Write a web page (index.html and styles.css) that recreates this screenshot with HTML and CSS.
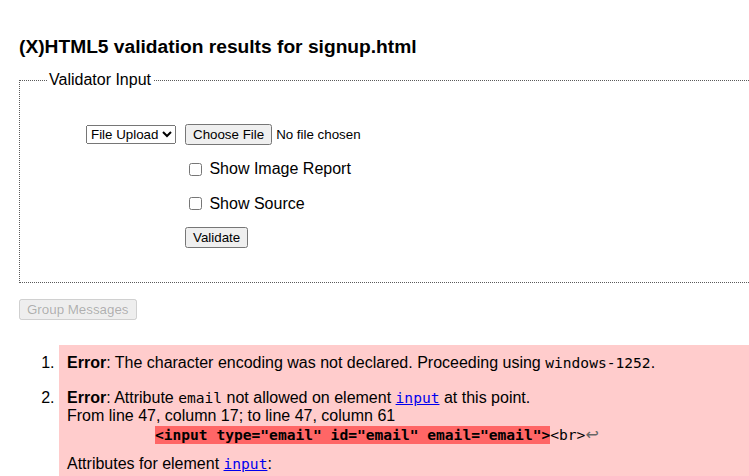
FILE: index.html
```html
<!DOCTYPE html>
<html lang="en">
<head>
<meta charset="utf-8">
<title>Validation results</title>
<link rel="stylesheet" href="styles.css">
</head>
<body>
<div class="page">
  <h2 class="title">(X)HTML5 validation results for signup.html</h2>
  <fieldset class="input-box">
    <legend class="legend">Validator Input</legend>
    <div class="form-grid">
      <div class="cell-left">
        <select class="mode">
          <option>File Upload</option>
        </select>
      </div>
      <div class="cell-right"><input type="file" class="file"></div>
      <div class="cell-right col2"><label class="check"><input type="checkbox" class="box"> Show Image Report</label></div>
      <div class="cell-right col2"><label class="check"><input type="checkbox" class="box"> Show Source</label></div>
      <div class="cell-right col2"><button class="btn">Validate</button></div>
    </div>
  </fieldset>
  <div class="group">
    <button class="btn" disabled>Group Messages</button>
  </div>
  <ol class="messages">
    <li class="error">
      <p class="msg"><strong>Error</strong>: The character encoding was not declared. Proceeding using <code class="code">windows-1252</code>.</p>
    </li>
    <li class="error">
      <p class="msg"><strong>Error</strong>: Attribute <code class="code">email</code> not allowed on element <a class="link" href="#"><code class="code">input</code></a> at this point.</p>
      <p class="msg">From line 47, column 17; to line 47, column 61</p>
      <p class="extract">          <b class="hl">&lt;input type="email" id="email" email="email"&gt;</b>&lt;br&gt;<span class="lf">↩</span></p>
      <p class="msg attrs">Attributes for element <a class="link" href="#"><code class="code">input</code></a>:</p>
    </li>
  </ol>
</div>
</body>
</html>
```
FILE: styles.css
```css
html, body {
  margin: 0;
  padding: 0;
  overflow: hidden;
  background: #fff;
}
body {
  font-family: "Liberation Sans", Arial, sans-serif;
  font-size: 16px;
  line-height: 18px;
  color: #000;
}
.page {
  width: 900px;
  padding: 0 0 0 19px;
}
.title {
  margin: 36px 0 0 0;
  font-size: 19.2px;
  line-height: 21px;
  font-weight: bold;
}
.input-box {
  margin: 14px 0 0 0;
  border: 1px dotted #5a5a5a;
  padding: 28px 12px 28px 12px;
  min-inline-size: 0;
}
.legend {
  margin-left: 15px;
  padding: 0 2px;
  font-size: 16px;
  line-height: 18px;
}
.form-grid {
  display: grid;
  grid-template-columns: 153px auto;
  grid-template-rows: 34px 36px 33px 34px;
  align-items: center;
  justify-content: start;
}
.cell-left {
  grid-column: 1;
  text-align: right;
  padding-right: 9px;
}
.cell-right {
  grid-column: 2;
  display: flex;
  align-items: center;
}
.col2 {
  grid-column: 2;
}
.mode, .file, .btn {
  font-family: "Liberation Sans", Arial, sans-serif;
  font-size: 13.333px;
}
.mode {
  margin: 0;
}
.file {
  margin: 0;
}
.check {
  font-size: 16px;
  display: flex;
  align-items: center;
  white-space: pre;
}
.box {
  margin: 3px 3px 3px 4px;
  width: 13px;
  height: 13px;
}
.btn {
  margin: 0;
}
.group {
  margin-top: 16px;
}
.group .btn {
  display: block;
}
.messages {
  margin: 25px 0 0 0;
  padding-left: 40px;
}
.error {
  background: #ffcccc;
  padding: 9px 8px 8px 8px;
}
.msg {
  margin: 0;
}
.attrs {
  margin-top: 12px;
}
.code {
  font-family: "DejaVu Sans Mono", "Liberation Mono", monospace;
  font-size: 14.6px;
  line-height: 1;
}
.link {
  color: #0000ee;
}
.extract {
  margin: 0;
  white-space: pre;
  font-family: "DejaVu Sans Mono", "Liberation Mono", monospace;
  font-size: 14.6px;
  line-height: 17px;
  margin-top: 1px;
}
.hl {
  background: #ff6666;
  font-weight: bold;
  padding-bottom: 1px;
}
.lf {
  color: #666;
  font-family: "DejaVu Sans", sans-serif;
  font-size: 16px;
  line-height: 1;
}
```
